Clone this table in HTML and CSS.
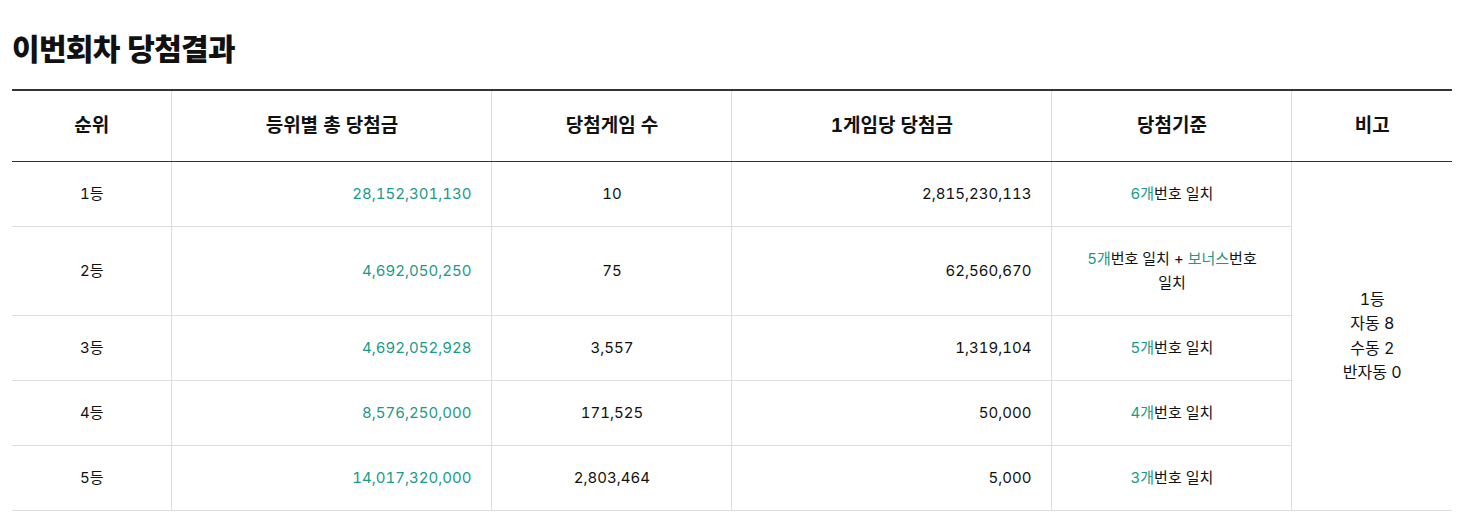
FILE: index.html
```html
<!DOCTYPE html>
<html lang="ko">
<head>
<meta charset="utf-8">
<title>이번회차 당첨결과</title>
<link rel="stylesheet" href="styles.css">
</head>
<body>
<main class="page">
  <h2 class="title">이번회차 당첨결과</h2>
  <table class="result">
    <colgroup>
      <col class="c-rank"><col class="c-total"><col class="c-count"><col class="c-per"><col class="c-rule"><col class="c-note">
    </colgroup>
    <thead>
      <tr>
        <th>순위</th>
        <th>등위별 총 당첨금</th>
        <th>당첨게임 수</th>
        <th>1게임당 당첨금</th>
        <th>당첨기준</th>
        <th>비고</th>
      </tr>
    </thead>
    <tbody>
      <tr>
        <td>1등</td>
        <td class="num green">28,152,301,130</td>
        <td>10</td>
        <td class="num">2,815,230,113</td>
        <td class="rule"><span class="green">6개</span>번호 일치</td>
        <td class="note" rowspan="5">1등<br>자동 8<br>수동 2<br>반자동 0</td>
      </tr>
      <tr>
        <td>2등</td>
        <td class="num green">4,692,050,250</td>
        <td>75</td>
        <td class="num">62,560,670</td>
        <td class="rule"><span class="green">5개</span>번호 일치 + <span class="green">보너스</span>번호 일치</td>
      </tr>
      <tr>
        <td>3등</td>
        <td class="num green">4,692,052,928</td>
        <td>3,557</td>
        <td class="num">1,319,104</td>
        <td class="rule"><span class="green">5개</span>번호 일치</td>
      </tr>
      <tr>
        <td>4등</td>
        <td class="num green">8,576,250,000</td>
        <td>171,525</td>
        <td class="num">50,000</td>
        <td class="rule"><span class="green">4개</span>번호 일치</td>
      </tr>
      <tr>
        <td>5등</td>
        <td class="num green">14,017,320,000</td>
        <td>2,803,464</td>
        <td class="num">5,000</td>
        <td class="rule"><span class="green">3개</span>번호 일치</td>
      </tr>
    </tbody>
  </table>
</main>
</body>
</html>
```
FILE: styles.css
```css
* { box-sizing: border-box; }
html, body { margin: 0; padding: 0; background: #fff; }
body {
  font-family: Inter, "Noto Sans CJK KR", sans-serif;
  font-variant-numeric: tabular-nums;
  color: #111;
}
.page { padding: 25px 12px 0 12px; }
.title {
  margin: 0 0 20px 0;
  font-family: "Noto Sans CJK KR", sans-serif;
  font-size: 30px;
  line-height: 44px;
  font-weight: 900;
  letter-spacing: -0.7px;
  color: #111;
}
.result {
  width: 100%;
  border-collapse: collapse;
  table-layout: fixed;
  border-top: 2px solid #333;
}
.c-rank { width: 11.11%; }
.c-total { width: 22.22%; }
.c-count { width: 16.67%; }
.c-per { width: 22.22%; }
.c-rule { width: 16.67%; }
.c-note { width: 11.11%; }
.result th {
  height: 71px;
  padding: 0 10px;
  font-size: 19px;
  font-weight: 700;
  line-height: 24px;
  text-align: center;
  border-bottom: 1px solid #333;
  border-left: 1px solid #ddd;
}
.result td {
  padding: 20px 20px;
  font-size: 15px;
  line-height: 24px;
  text-align: center;
  border-bottom: 1px solid #ddd;
  border-left: 1px solid #ddd;
}
.result th:first-child, .result tr > td:first-child { border-left: none; }
.result td.num { text-align: right; }
.result td.rule { padding: 20px 26px; }
.result td.note { font-size: 16px; line-height: 24.5px; }
.green { color: #1a9a88; }
```
